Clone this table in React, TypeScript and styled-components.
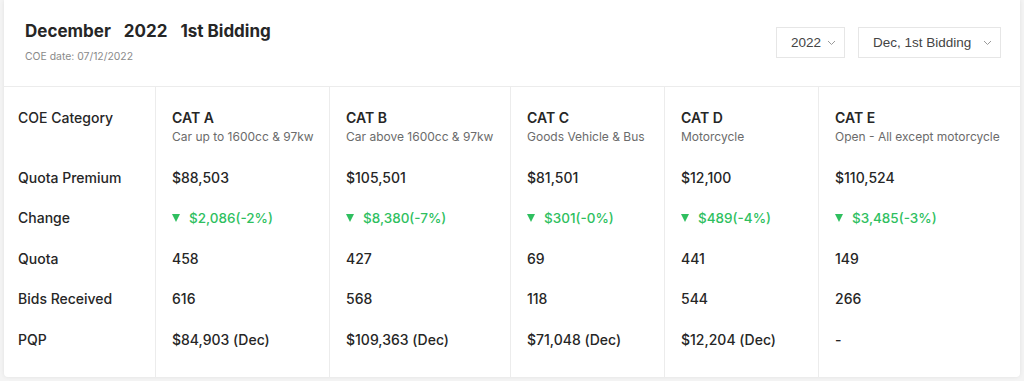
import React from 'react';
import styled, { createGlobalStyle } from 'styled-components';

const GlobalStyle = createGlobalStyle`
  html, body {
    margin: 0;
    padding: 0;
    background: #f4f4f4;
  }
  body {
    font-family: Inter, "Open Sans", sans-serif;
  }
`;

const Page = styled.div`
  padding: 0 4px 4px 4px;
`;

const Card = styled.div`
  background: #ffffff;
  box-shadow: 0 0 4px rgba(0, 0, 0, 0.08);
  border-radius: 0 0 4px 4px;
`;

const Header = styled.div`
  height: 87px;
  box-sizing: border-box;
  border-bottom: 1px solid #ececec;
  display: flex;
  align-items: flex-start;
  justify-content: space-between;
  padding: 20px 19px 0 21px;
`;

const TitleBlock = styled.div`
  display: flex;
  flex-direction: column;
  gap: 8px;
`;

const Title = styled.h1`
  margin: 0;
  font-size: 17px;
  line-height: 22px;
  font-weight: 700;
  color: #262626;
  display: flex;
  gap: 13px;
`;

const SubTitle = styled.div`
  font-size: 10.4px;
  line-height: 14px;
  color: #8a8a8a;
`;

const Filters = styled.div`
  display: flex;
  gap: 13px;
  margin-top: 7px;
`;

const SelectBox = styled.div<{ $width: number }>`
  width: ${p => p.$width}px;
  height: 31px;
  box-sizing: border-box;
  border: 1px solid #e6e6e6;
  display: flex;
  align-items: center;
  justify-content: space-between;
  padding: 0 8px 0 14px;
  font-family: "Liberation Sans", Arial, sans-serif;
  font-size: 13.5px;
  color: #444;
`;

const Table = styled.div`
  display: grid;
  grid-template-columns: 152px 174px 181px 154px 154px 1fr;
`;

const Column = styled.div<{ $last?: boolean }>`
  display: flex;
  flex-direction: column;
  padding: 21px 6px 17px 16px;
  border-right: ${p => (p.$last ? 'none' : '1px solid #ececec')};
  &:first-child {
    padding-left: 14px;
  }
`;

const HeadCell = styled.div`
  height: 49px;
  display: flex;
  flex-direction: column;
`;

const CellTitle = styled.div<{ $label?: boolean }>`
  font-size: 14px;
  line-height: 20px;
  font-weight: ${p => (p.$label ? 500 : 600)};
  color: #262626;
  white-space: nowrap;
`;

const CellSub = styled.div`
  font-size: 12px;
  line-height: 18px;
  color: #6b6b6b;
  white-space: nowrap;
`;

const Cell = styled.div<{ $green?: boolean }>`
  height: 40.5px;
  display: flex;
  align-items: center;
  gap: 9px;
  font-size: ${p => (p.$green ? '13.5px' : '14px')};
  font-weight: 500;
  color: ${p => (p.$green ? '#2fbf5f' : '#262626')};
  white-space: nowrap;
`;

const Triangle = styled.span`
  width: 0;
  height: 0;
  border-left: 4.5px solid transparent;
  border-right: 4.5px solid transparent;
  border-top: 8px solid #2fbf5f;
`;

const Chevron = () => (
  <svg width="9" height="6" viewBox="0 0 9 6" fill="none">
    <path d="M1 1l3.5 3.5L8 1" stroke="#9a9a9a" strokeWidth="1" />
  </svg>
);

type Cat = {
  code: string;
  name: string;
  premium: string;
  change: string;
  quota: string;
  bids: string;
  pqp: string;
};

const cats: Cat[] = [
  { code: 'CAT A', name: 'Car up to 1600cc & 97kw', premium: '$88,503', change: '$2,086(-2%)', quota: '458', bids: '616', pqp: '$84,903 (Dec)' },
  { code: 'CAT B', name: 'Car above 1600cc & 97kw', premium: '$105,501', change: '$8,380(-7%)', quota: '427', bids: '568', pqp: '$109,363 (Dec)' },
  { code: 'CAT C', name: 'Goods Vehicle & Bus', premium: '$81,501', change: '$301(-0%)', quota: '69', bids: '118', pqp: '$71,048 (Dec)' },
  { code: 'CAT D', name: 'Motorcycle', premium: '$12,100', change: '$489(-4%)', quota: '441', bids: '544', pqp: '$12,204 (Dec)' },
  { code: 'CAT E', name: 'Open - All except motorcycle', premium: '$110,524', change: '$3,485(-3%)', quota: '149', bids: '266', pqp: '-' },
];

const App: React.FC = () => {
  return (
    <Page>
      <GlobalStyle />
      <Card>
        <Header>
          <TitleBlock>
            <Title>
              <span>December</span>
              <span>2022</span>
              <span>1st Bidding</span>
            </Title>
            <SubTitle>COE date: 07/12/2022</SubTitle>
          </TitleBlock>
          <Filters>
            <SelectBox $width={69}>
              2022 <Chevron />
            </SelectBox>
            <SelectBox $width={143}>
              Dec, 1st Bidding <Chevron />
            </SelectBox>
          </Filters>
        </Header>
        <Table>
          <Column>
            <HeadCell>
              <CellTitle $label>COE Category</CellTitle>
            </HeadCell>
            <Cell>Quota Premium</Cell>
            <Cell>Change</Cell>
            <Cell>Quota</Cell>
            <Cell>Bids Received</Cell>
            <Cell>PQP</Cell>
          </Column>
          {cats.map((c, i) => (
            <Column key={c.code} $last={i === cats.length - 1}>
              <HeadCell>
                <CellTitle>{c.code}</CellTitle>
                <CellSub>{c.name}</CellSub>
              </HeadCell>
              <Cell>{c.premium}</Cell>
              <Cell $green>
                <Triangle />
                {c.change}
              </Cell>
              <Cell>{c.quota}</Cell>
              <Cell>{c.bids}</Cell>
              <Cell>{c.pqp}</Cell>
            </Column>
          ))}
        </Table>
      </Card>
    </Page>
  );
};

export default App;
